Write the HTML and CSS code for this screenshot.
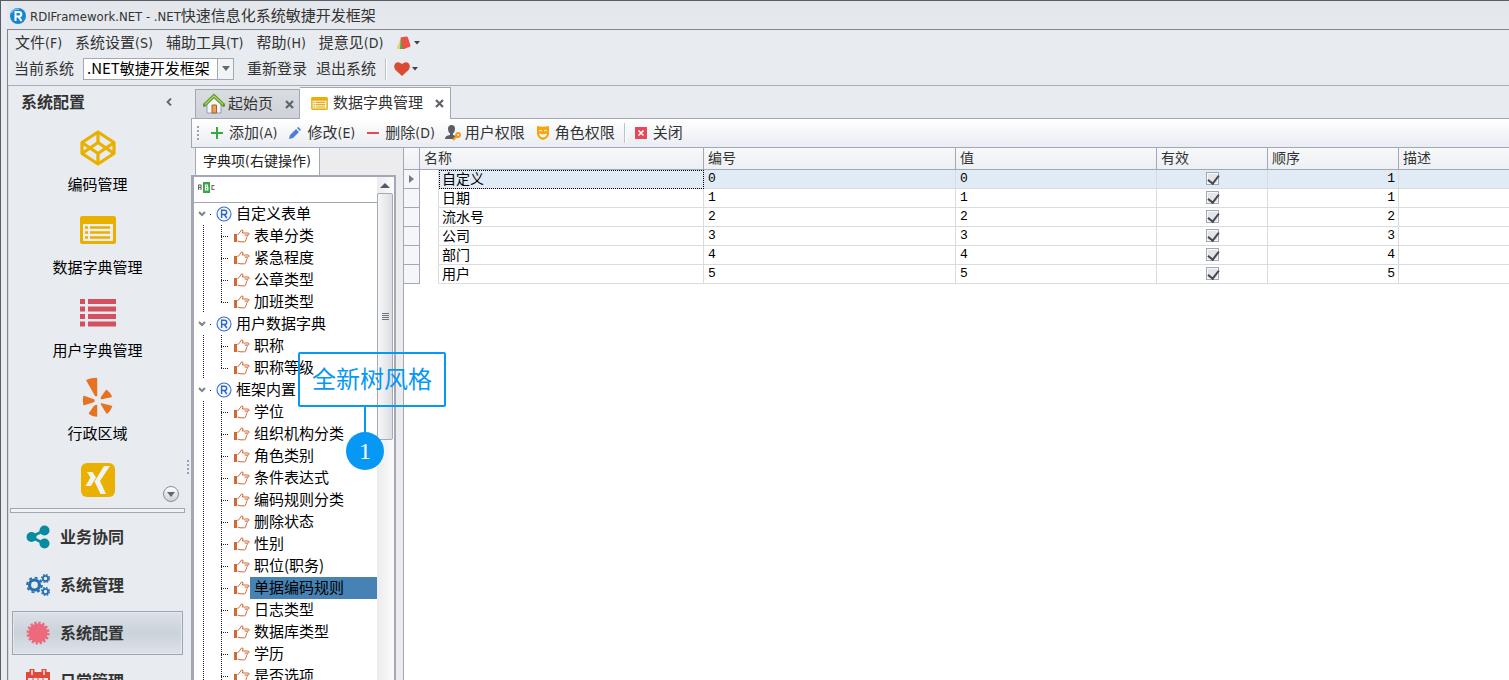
FILE: index.html
```html
<!DOCTYPE html>
<html lang="zh-CN">
<head>
<meta charset="utf-8">
<title>RDIFramework.NET</title>
<link rel="stylesheet" href="styles.css">
</head>
<body>
<svg class="defs" aria-hidden="true">
  <symbol id="hand" viewBox="0 0 16 14">
    <path d="M0 5h3v8H0z" fill="#cf6a35"/>
    <path d="M3.500 5.500L5 4.500L7.500 1Q9 .5 9 2L8.300 4H14.500Q15.800 5.200 14.500 6H10.500M13 6.200Q13.800 8 12.500 8.600M12.300 8.600Q13 10.300 11.800 10.800Q12 12.600 10.500 12.800H6L3.500 12" fill="none" stroke="#cf6a35" stroke-width="1"/>
  </symbol>
  <symbol id="reg" viewBox="0 0 16 16">
    <circle cx="8" cy="8" r="7" fill="#f4f8ff" stroke="#3b6fd0" stroke-width="1.100"/>
    <path d="M5.600 12V4.300H8.300Q10.700 4.300 10.700 6.400Q10.700 8.500 8.300 8.500H5.600M8.300 8.500L10.900 12" fill="none" stroke="#2f63c8" stroke-width="1.400"/>
  </symbol>
  <symbol id="chev" viewBox="0 0 8 6"><path d="M1 1L4 4L7 1" fill="none" stroke="#7d838e" stroke-width="2"/></symbol>
  <symbol id="drop" viewBox="0 0 6 4"><path d="M0 0H6L3 3.500z" fill="#3f444b"/></symbol>
  <symbol id="list" viewBox="0 0 36 28">
    <rect width="36" height="28" rx="2.500" fill="#eab000"/>
    <path d="M3 8H33V24Q33 25 32 25H4Q3 25 3 24z" fill="#eceef0"/>
    <path d="M5 11.500H8M5 16.500H8M5 21.500H8M10 11.500H30M10 16.500H30M10 21.500H30" stroke="#eab000" stroke-width="2.400"/>
  </symbol>
  <symbol id="x" viewBox="0 0 9 9"><path d="M1 1L8 8M8 1L1 8" stroke="#5f646d" stroke-width="2.200"/></symbol>
</svg>
<div class="window">
  <header class="titlebar">
    <svg width="16" height="16" viewBox="0 0 16 16"><circle cx="8" cy="8" r="8" fill="#1685d2"/><path d="M1 5Q4 0 9 1.500" stroke="#6cc3f2" stroke-width="1.500" fill="none"/><path d="M5.500 13V4H8.500Q11.300 4 11.300 6.300T8.500 8.600H5.500M8.500 8.600L11.500 13" fill="none" stroke="#fff" stroke-width="2"/></svg>
    <span><span class="lat">RDIFramework.NET - .NET</span>快速信息化系统敏捷开发框架</span>
  </header>
  <div class="frame">
    <nav class="menubar">
      <button>文件<span class="lat">(F)</span></button>
      <button>系统设置<span class="lat">(S)</span></button>
      <button>辅助工具<span class="lat">(T)</span></button>
      <button>帮助<span class="lat">(H)</span></button>
      <button>提意见<span class="lat">(D)</span></button>
      <button class="pick" aria-label="主题"><svg width="16" height="14" viewBox="0 0 16 14"><path d="M5 2L9 4L9 13H1.500Q.5 13 1 11.500z" fill="#e8cf7a"/><path d="M4.500 4L8 4L9 13H4z" fill="#58a84a"/><path d="M4.500 2.500Q4.300 1.500 5.500 1.300L10.500 .5Q11.500 .4 11.900 1.500L14.500 9.500Q14.700 10.500 13.800 10.800L8 12.900Q7 13 6.700 12z" fill="#e9514b"/></svg><svg width="6" height="4"><use href="#drop"/></svg></button>
    </nav>
    <div class="appbar">
      <label for="sys">当前系统</label>
      <div class="combo">
        <select id="sys"><option>.NET敏捷开发框架</option></select>
        <span class="arrow"><svg width="8" height="5" viewBox="0 0 8 5"><path d="M0 0H8L4 5z" fill="#626973"/></svg></span>
      </div>
      <button>重新登录</button>
      <button>退出系统</button>
      <span class="sep"></span>
      <button class="pick" aria-label="收藏"><svg width="16" height="14" viewBox="0 0 16 14"><path d="M8 14L1.500 8Q-1 4.500 1.200 1.500Q4-1.200 8 2Q12-1.200 14.800 1.500Q17 4.500 14.500 8z" fill="#da4a35"/></svg><svg width="6" height="4"><use href="#drop"/></svg></button>
    </div>
    <div class="main">
      <aside class="sidebar">
        <div class="side-head"><h2>系统配置</h2><button aria-label="收起"><svg width="6" height="8" viewBox="0 0 6 8"><path d="M5 .5L1.500 4L5 7.500" fill="none" stroke="#5f646d" stroke-width="1.800"/></svg></button></div>
        <div class="tiles">
          <a href="#"><svg width="36" height="36" viewBox="0 0 36 36"><path d="M18 2L34 12.500V23.500L18 34L2 23.500V12.500zM18 2V12.500M18 34V23.500M2 12.500L18 23.500L34 12.500M2 23.500L18 12.500L34 23.500" fill="none" stroke="#eab000" stroke-width="3.200" stroke-linejoin="round"/></svg>编码管理</a>
          <a href="#"><svg width="36" height="36" viewBox="0 -3 36 36"><use href="#list" width="36" height="28"/></svg>数据字典管理</a>
          <a href="#"><svg width="36" height="36" viewBox="0 0 36 36"><path d="M0 5.500H5M0 13H5M0 20.500H5M0 28H5M8 5.500H36M8 13H36M8 20.500H36M8 28H36" stroke="#d2505f" stroke-width="5.200"/></svg>用户字典管理</a>
          <a href="#"><svg width="36" height="40" viewBox="0 0 36 40"><g fill="#e67321" stroke="#e67321" stroke-width="1.500" stroke-linejoin="round"><path d="M7 3.500Q11 1.500 16.500 1.500V18.500H15.500z"/><path d="M21.500 20.500L26.500 13.500Q29.500 15.500 31.200 19.500L21.500 21.500z"/><path d="M4 19.500L13.500 23Q14.500 23.500 13.500 24.500L4 27.500Q3 23.500 4 19.500z"/><path d="M16.500 28.500V39Q12.500 39 9.500 36.500L14.500 29.500z"/><path d="M21.500 27L31.500 29.500Q30 33.500 27 36z"/></g></svg>行政区域</a>
          <a href="#" aria-label="更多功能"><svg width="34" height="34" viewBox="0 0 34 34"><rect width="34" height="34" rx="6" fill="#eab000"/><path d="M6 9H11.500L15 14.500L10 23H4.500L9.500 14.500zM23 3H29L19 18L25 31H19.500L13.500 18.500z" fill="#f3f3ef"/></svg></a>
        </div>
        <button class="more" aria-label="向下滚动"><svg width="8" height="5" viewBox="0 0 8 5"><path d="M0 0H8L4 5z" fill="#626973"/></svg></button>
        <span class="side-grip"></span>
        <div class="splitter"></div>
        <nav class="groups">
          <button><svg width="24" height="24" viewBox="0 0 24 24"><path d="M19 5L5 12L19 19" fill="none" stroke="#078b9d" stroke-width="2.600"/><g fill="#078b9d"><circle cx="18.500" cy="5.500" r="5"/><circle cx="5.500" cy="12" r="5"/><circle cx="18.500" cy="18.500" r="5"/></g></svg><span>业务协同</span></button>
          <button><svg width="24" height="24" viewBox="0 0 24 24"><g fill="none" stroke="#286fae"><circle cx="8.500" cy="12" r="5" stroke-width="3.200"/><circle cx="8.500" cy="12" r="7.400" stroke-width="1.800" stroke-dasharray="3 2.800"/><circle cx="19.500" cy="5.500" r="2.600" stroke-width="1.800"/><circle cx="19.500" cy="5.500" r="4" stroke-width="1.200" stroke-dasharray="1.700 1.450"/><circle cx="19.500" cy="18.500" r="2.600" stroke-width="1.800"/><circle cx="19.500" cy="18.500" r="4" stroke-width="1.200" stroke-dasharray="1.700 1.450"/></g></svg><span>系统管理</span></button>
          <button class="active"><svg width="24" height="24" viewBox="0 0 24 24"><circle cx="12" cy="12" r="9.500" fill="#ec6a7c"/><circle cx="12" cy="12" r="10" fill="none" stroke="#ec6a7c" stroke-width="3" stroke-dasharray="2.300 1.627"/></svg><span>系统配置</span></button>
          <button><svg width="24" height="24" viewBox="0 0 24 24"><rect x="1" y="4" width="22" height="20" fill="none" stroke="#e0493c" stroke-width="2"/><path d="M1 4H23V9H1z" fill="#e0493c"/><path d="M6 0V6M18 0V6" stroke="#e0493c" stroke-width="5"/><path d="M6 1V6M18 1V6" stroke="#f4e6e6" stroke-width="1.500"/><path d="M2 13H22M7 9V24M12 9V24M17 9V24" stroke="#e0493c"/></svg><span>日常管理</span></button>
        </nav>
      </aside>
      <section class="workspace">
        <div class="tabs">
          <div class="tab"><svg width="22" height="22" viewBox="0 0 22 22"><path d="M4 11L11 4L18 11V20H4z" fill="#f4f5fa" stroke="#8f9dbd"/><path d="M9 12H13.500V20H9z" fill="#f0a14f" stroke="#a7642c"/><path d="M1.500 12L11 3L20.500 12" fill="none" stroke="#5c962d" stroke-width="3.600" stroke-linecap="round"/><path d="M2 11.500L11 3L20 11.500" fill="none" stroke="#a4d45c" stroke-width="1.600"/></svg><span>起始页</span><button aria-label="关闭起始页"><svg width="9" height="9"><use href="#x"/></svg></button></div>
          <div class="tab current"><svg width="17" height="13"><use href="#list"/></svg><span>数据字典管理</span><button aria-label="关闭数据字典管理"><svg width="9" height="9"><use href="#x"/></svg></button></div>
        </div>
        <div class="toolbar">
          <span class="grip"></span>
          <button><svg width="12" height="12" viewBox="0 0 12 12"><path d="M6 0V12M0 6H12" stroke="#3aa746" stroke-width="2"/></svg><span>添加<span class="lat">(A)</span></span></button>
          <button><svg width="12" height="12" viewBox="0 0 12 12"><path d="M0 12L1 8L7 2L10 5L4 11zM8 1L9 0Q10 0 12 3L11 4z" fill="#4d7fd6"/></svg><span>修改<span class="lat">(E)</span></span></button>
          <button><svg width="12" height="12" viewBox="0 0 12 12"><path d="M0 6H12" stroke="#e8475a" stroke-width="2"/></svg><span>删除<span class="lat">(D)</span></span></button>
          <button class="wide"><svg width="16" height="16" viewBox="0 0 16 16"><path d="M3 4Q3 0 6.500 0T10 4Q10 7 8 8.500V10L11 11L8 14H0Q0 10.500 5 10V8.500Q3 7 3 4z" fill="#595e66"/><path d="M8 15L12.500 10.500" stroke="#f39a14" stroke-width="2"/><circle cx="13" cy="10" r="2" fill="none" stroke="#f39a14" stroke-width="1.800"/></svg><span>用户权限</span></button>
          <button><svg width="12" height="14" viewBox="0 0 12 14"><path d="M0 0Q6 1.500 12 0V8Q11 13 6 14Q1 13 0 8z" fill="#fba30c"/><path d="M2 5Q3.500 3.500 5 5M7 5Q8.500 3.500 10 5M2.500 8Q6 9.500 9.500 8Q9 11 6 11Q3 11 2.500 8z" fill="#fff" stroke="#fff" stroke-width=".8"/></svg><span>角色权限</span></button>
          <span class="sep"></span>
          <button><svg width="12" height="12" viewBox="0 0 12 12"><rect width="12" height="12" fill="#e8475a"/><path d="M3.500 3.500L8.500 8.500M8.500 3.500L3.500 8.500" stroke="#fff" stroke-width="1.600"/></svg><span>关闭</span></button>
        </div>
        <div class="content">
          <div class="dict">
            <div class="subtabs"><button>字典项<span class="lat">(</span>右键操作<span class="lat">)</span></button></div>
            <div class="treebox">
              <div class="treecol">
                <label class="filter"><svg width="17" height="11" viewBox="0 0 17 11"><rect x="5" width="7" height="11" fill="#37a845"/><path d="M7.500 8V3H9.500V5.500H7.500H9.800V8z" fill="none" stroke="#fff" stroke-width="1.200"/><path d="M.6 8V3H3V8M.6 5.500H3M16.500 3.500H14V7.500H16.500" fill="none" stroke="#666" stroke-width="1.100"/></svg><input type="text" aria-label="筛选"></label>
                <ul class="tree">
                  <li class="root"><svg width="8" height="6"><use href="#chev"/></svg><i></i><svg width="16" height="16"><use href="#reg"/></svg><span>自定义表单</span></li>
                  <li><b></b><svg width="16" height="14"><use href="#hand"/></svg><span>表单分类</span></li>
                  <li><b></b><svg width="16" height="14"><use href="#hand"/></svg><span>紧急程度</span></li>
                  <li><b></b><svg width="16" height="14"><use href="#hand"/></svg><span>公章类型</span></li>
                  <li class="last"><b></b><svg width="16" height="14"><use href="#hand"/></svg><span>加班类型</span></li>
                  <li class="root"><svg width="8" height="6"><use href="#chev"/></svg><i></i><svg width="16" height="16"><use href="#reg"/></svg><span>用户数据字典</span></li>
                  <li><b></b><svg width="16" height="14"><use href="#hand"/></svg><span>职称</span></li>
                  <li class="last"><b></b><svg width="16" height="14"><use href="#hand"/></svg><span>职称等级</span></li>
                  <li class="root"><svg width="8" height="6"><use href="#chev"/></svg><i></i><svg width="16" height="16"><use href="#reg"/></svg><span>框架内置</span></li>
                  <li><b></b><svg width="16" height="14"><use href="#hand"/></svg><span>学位</span></li>
                  <li><b></b><svg width="16" height="14"><use href="#hand"/></svg><span>组织机构分类</span></li>
                  <li><b></b><svg width="16" height="14"><use href="#hand"/></svg><span>角色类别</span></li>
                  <li><b></b><svg width="16" height="14"><use href="#hand"/></svg><span>条件表达式</span></li>
                  <li><b></b><svg width="16" height="14"><use href="#hand"/></svg><span>编码规则分类</span></li>
                  <li><b></b><svg width="16" height="14"><use href="#hand"/></svg><span>删除状态</span></li>
                  <li><b></b><svg width="16" height="14"><use href="#hand"/></svg><span>性别</span></li>
                  <li><b></b><svg width="16" height="14"><use href="#hand"/></svg><span>职位(职务)</span></li>
                  <li class="selected"><b></b><svg width="16" height="14"><use href="#hand"/></svg><span>单据编码规则</span></li>
                  <li><b></b><svg width="16" height="14"><use href="#hand"/></svg><span>日志类型</span></li>
                  <li><b></b><svg width="16" height="14"><use href="#hand"/></svg><span>数据库类型</span></li>
                  <li><b></b><svg width="16" height="14"><use href="#hand"/></svg><span>学历</span></li>
                  <li><b></b><svg width="16" height="14"><use href="#hand"/></svg><span>是否选项</span></li>
                </ul>
              </div>
              <div class="scroll"><svg width="10" height="6" viewBox="0 0 10 6"><path d="M5 0L10 5H0z" fill="#555b63"/></svg><div class="thumb"><span class="ridges"></span></div></div>
            </div>
            <div class="callout"><div class="callout-box">全新树风格</div><div class="callout-stem"></div><div class="callout-dot">1</div></div>
          </div>
          <div class="gridwrap">
            <table class="grid">
              <colgroup><col class="c-ind"><col class="c-pad"><col class="c-name"><col class="c-code"><col class="c-val"><col class="c-on"><col class="c-ord"><col></colgroup>
              <thead><tr><th></th><th colspan="2">名称</th><th>编号</th><th>值</th><th>有效</th><th>顺序</th><th>描述</th></tr></thead>
              <tbody>
                <tr class="focus"><th><svg width="5" height="8" viewBox="0 0 5 8"><path d="M0 0L5 4L0 8z" fill="#737a86"/></svg></th><td class="pad"></td><td>自定义</td><td class="num">0</td><td class="num">0</td><td class="on"><input type="checkbox" checked aria-label="有效"></td><td class="num ord">1</td><td></td></tr>
                <tr><th></th><td class="pad"></td><td>日期</td><td class="num">1</td><td class="num">1</td><td class="on"><input type="checkbox" checked aria-label="有效"></td><td class="num ord">1</td><td></td></tr>
                <tr><th></th><td class="pad"></td><td>流水号</td><td class="num">2</td><td class="num">2</td><td class="on"><input type="checkbox" checked aria-label="有效"></td><td class="num ord">2</td><td></td></tr>
                <tr><th></th><td class="pad"></td><td>公司</td><td class="num">3</td><td class="num">3</td><td class="on"><input type="checkbox" checked aria-label="有效"></td><td class="num ord">3</td><td></td></tr>
                <tr><th></th><td class="pad"></td><td>部门</td><td class="num">4</td><td class="num">4</td><td class="on"><input type="checkbox" checked aria-label="有效"></td><td class="num ord">4</td><td></td></tr>
                <tr><th></th><td class="pad"></td><td>用户</td><td class="num">5</td><td class="num">5</td><td class="on"><input type="checkbox" checked aria-label="有效"></td><td class="num ord">5</td><td></td></tr>
              </tbody>
            </table>
          </div>
        </div>
      </section>
    </div>
  </div>
</div>
</body>
</html>
```
FILE: styles.css
```css
* { box-sizing: border-box; }
body {
  margin: 0;
  font: 15px/20px "Noto Sans CJK SC", sans-serif;
  color: #333;
  background: #e8ebf0;
}
.defs { position: absolute; width: 0; height: 0; }
svg { display: block; flex: none; }
button {
  margin: 0; padding: 0; border: 0; background: none;
  font: inherit; color: inherit; white-space: nowrap;
}
.lat { font-family: "DejaVu Sans Condensed", "Noto Sans", sans-serif; font-size: 13px; }
button .lat { font-size: 14px; }

.window {
  height: 100vh; display: flex; flex-direction: column; overflow: hidden;
  border-top: 1px solid #595d68; border-left: 1px solid #595d68;
  padding-left: 6px;
}
.titlebar {
  height: 28px; padding: 2px 0 0 3px; display: flex; align-items: center; gap: 4px;
  background: linear-gradient(#e3e6ea, #e6e9ed);
}
.frame {
  flex: 1; min-height: 0; display: flex; flex-direction: column;
  border-top: 1px solid #82868f; border-left: 1px solid #82868f;
}
.menubar { height: 26px; padding: 0 7px 2px; display: flex; align-items: center; gap: 13px; }
.pick { display: flex; align-items: center; gap: 2px; }
.menubar .pick { padding-top: 2px; }
.appbar { height: 29px; padding: 0 6px 4px; display: flex; align-items: center; gap: 9px; }
.appbar label, .appbar button:not(.pick) { padding-bottom: 2px; }
.combo {
  display: flex; width: 151px; height: 22px; margin-right: 4px;
  border: 1px solid #a2a9b5; background: #fff;
}
.combo select {
  flex: 1; min-width: 0; border: 0; padding: 0 0 2px 3px; appearance: none;
  background: #fff; font: inherit; line-height: 18px; color: #000;
}
.arrow { width: 16px; display: grid; place-items: center; background: #f1f3f5; border-left: 1px solid #a2a9b5; }
.sep { width: 2px; height: 22px; background: #fff; border-left: 1px solid #bcc1ca; }
.appbar .pick { margin-left: -2px; }
.main { flex: 1; min-height: 0; display: flex; border-top: 1px solid #a8aeb9; }

.sidebar { position: relative; flex: none; width: 183px; padding: 0 6px 0 1px; border-left: 1px solid #d4d8df; }
.side-head { display: flex; justify-content: space-between; align-items: center; height: 32px; padding: 0 13px 0 11px; }
h2 { margin: 0; padding-bottom: 3px; font-size: 16px; line-height: 20px; font-weight: 700; }
.tiles { height: 390px; overflow: hidden; padding-top: 12px; display: grid; grid-auto-rows: 83px; }
.tiles a {
  display: grid; grid-template-rows: 36px 20px; row-gap: 8px; justify-items: center; align-items: center;
  align-content: start; color: #000; text-decoration: none;
}
.more {
  position: absolute; right: 12px; top: 400px; width: 16px; height: 16px;
  display: grid; place-items: center; border: 1px solid #878d9b; border-radius: 50%;
  background: linear-gradient(#fff, #ccd0d8);
}
.side-grip, .grip { width: 2px; background: repeating-linear-gradient(#9da3ae 0 2px, transparent 2px 4px); }
.side-grip { position: absolute; right: 2px; top: 374px; height: 14px; }
.splitter { height: 5px; border: 1px solid #a2a8b3; background: #f0f2f5; }
.groups { padding: 2px; display: flex; flex-direction: column; gap: 4px; }
.groups button {
  height: 44px; flex: none; padding: 0 13px; display: flex; align-items: center; gap: 10px;
  border: 1px solid transparent; font-size: 16px; line-height: 20px; font-weight: 700;
}
.groups button span { padding-bottom: 3px; }
.groups .active {
  border-color: #9ea6b3; box-shadow: inset 0 0 0 1px #e3e8ee;
  background: linear-gradient(#dce1e7, #cad2da 50%, #dde2e8);
}

.workspace { flex: 1; min-width: 0; display: flex; flex-direction: column; }
.tabs { height: 33px; padding: 0 4px; display: flex; align-items: flex-end; border-bottom: 1px solid #a2a8b7; }
.tab {
  height: 29px; display: flex; align-items: center; padding: 0 5px 0 7px; gap: 3px;
  border: 1px solid #a2a8b7; border-bottom: 0; background: linear-gradient(#d9dce1, #cfd3d9);
}
.tab span { padding-bottom: 2px; }
.tab button { padding-left: 9px; }
.tab.current { height: 32px; margin-bottom: -1px; padding: 0 6px 0 11px; gap: 5px; border-left-width: 0; background: #fff; }
.tab.current span { padding-bottom: 3px; }
.tab.current button { padding-left: 7px; }
.toolbar {
  height: 28px; padding: 0 5px; display: flex; align-items: center; gap: 12px;
  background: linear-gradient(#fff, #e9ecf1); border-left: 1px solid #a2a8b7;
}
.toolbar button { display: flex; align-items: center; gap: 6px; }
.toolbar button > span { padding-bottom: 2px; }
.toolbar .wide { gap: 4px; margin-left: -2px; }
.toolbar .grip { height: 14px; }
.toolbar .sep { height: 20px; margin: 0 -3px; }
.content { flex: 1; min-height: 0; display: flex; border-top: 1px solid #a2a8b7; }

.dict { position: relative; flex: none; width: 212px; padding-right: 7px; display: flex; flex-direction: column; background: #ececef; }
.subtabs { height: 27px; padding-left: 4px; }
.subtabs button { height: 27px; padding: 0 8px 2px 7px; background: #fff; border: 1px solid #a2a8b7; border-width: 0 1px; color: #222; font-size: 14px; }
.treebox { flex: 1; min-height: 0; display: flex; border: 2px solid #a2a8b7; border-left-width: 3px; border-bottom: 0; background: #fff; overflow: hidden; }
.treecol { flex: 1; min-width: 0; }
.filter { display: flex; align-items: center; height: 26px; padding: 0 4px 4px; border-bottom: 1px solid #a2a8b7; }
.filter input { flex: 1; min-width: 0; border: 0; padding: 0; background: transparent; }
.tree { list-style: none; margin: 0; padding: 0; color: #000; }
.tree li { height: 22px; display: flex; align-items: center; padding-left: 27px; background: repeating-linear-gradient(#222 0 1px, transparent 1px 2px) 9px 0 / 1px 100% no-repeat; }
.tree li > span { padding: 0 4px 2px; height: 22px; line-height: 20px; flex: 1; white-space: nowrap; }
.tree .root { padding-left: 4px; background: none; }
.tree .root i { width: 1px; height: 1px; margin: 0 5px 0 4px; background: #222; }
.tree b {
  align-self: stretch; width: 13px; display: flex; align-items: center;
  background: repeating-linear-gradient(#222 0 1px, transparent 1px 2px) 0 0 / 1px 100% no-repeat;
}
.tree b::after { content: ""; width: 8px; height: 1px; background: repeating-linear-gradient(90deg, #222 0 1px, transparent 1px 2px); }
.tree .last b { height: 12px; align-self: flex-start; align-items: flex-end; }
.tree .selected > span { background: #4682b4; }
.scroll { width: 17px; padding: 6px 1px 0 0; background: linear-gradient(90deg, #ececee, #fbfbfc); display: flex; flex-direction: column; align-items: center; gap: 4px; }
.thumb { width: 16px; height: 247px; display: grid; place-items: center; border: 1px solid #a7abb1; border-radius: 2px; background: linear-gradient(90deg, #f6f7f8, #dcdfe2); }
.ridges { width: 7px; height: 7px; background: repeating-linear-gradient(#6e737b 0 1px, transparent 1px 2px); }

.callout {
  position: absolute; left: 107px; top: 204px; display: flex; flex-direction: column; align-items: center;
  width: 148px; z-index: 2;
}
.callout-box { align-self: stretch; border: 2px solid #0797f5; border-radius: 2px; padding: 6px 0 9px; text-align: center; font-size: 24px; line-height: 36px; color: #0797f5; white-space: nowrap; }
.callout-stem { width: 2px; height: 25px; background: #0797f5; margin-right: 14px; }
.callout-dot { width: 38px; height: 38px; margin-right: 14px; border-radius: 50%; background: #0797f5; color: #fff; font: 24px/38px "Liberation Serif", serif; text-align: center; }

.gridwrap { flex: 1; min-width: 0; background: #fff; border-left: 1px solid #a2a8b7; overflow: hidden; }
.grid { width: 100%; table-layout: fixed; border-collapse: separate; border-spacing: 0; font-size: 14px; line-height: 16px; color: #000; }
.c-ind { width: 16px; }
.c-pad { width: 19px; }
.c-name { width: 265px; }
.c-code { width: 252px; }
.c-val { width: 201px; }
.c-on { width: 111px; }
.c-ord { width: 131px; }
.grid th, .grid td { height: 19px; padding: 0 3px 2px; text-align: left; font-weight: 400; border-right: 1px solid #d9dcdf; border-bottom: 1px solid #d9dcdf; }
.grid th { border-color: #a2a8b7; background: #f4f6f9; }
.grid thead th { height: 22px; padding: 0 4px 3px; background: linear-gradient(#f7f8fa, #edf0f3); color: #333; }
.grid tbody th { padding: 0 5px; }
.grid th:last-child, .grid td:last-child { border-right: 0; }
.grid .pad { border-bottom-color: transparent; background: #fff; }
.grid .focus td:not(.pad) { background: #e1ebf5; }
.grid .focus .pad + td { outline: 1px dotted #000; outline-offset: -1px; }
.grid .num { padding: 0 4px; font-family: "Liberation Mono", monospace; font-size: 13px; }
.grid .ord { padding: 0 3px; text-align: right; }
.grid .on { text-align: center; }
.grid input {
  appearance: none; display: block; width: 13px; height: 13px; margin: 0 auto; border: 1px solid #a2a8b7;
  background: #e3e5e8; box-shadow: inset 0 0 0 1px #f7f8f9; position: relative;
}
.grid input::after {
  content: ""; position: absolute; left: 3px; top: 0; width: 5px; height: 9px;
  border: solid #444a50; border-width: 0 2px 2px 0; transform: rotate(38deg);
}
```
